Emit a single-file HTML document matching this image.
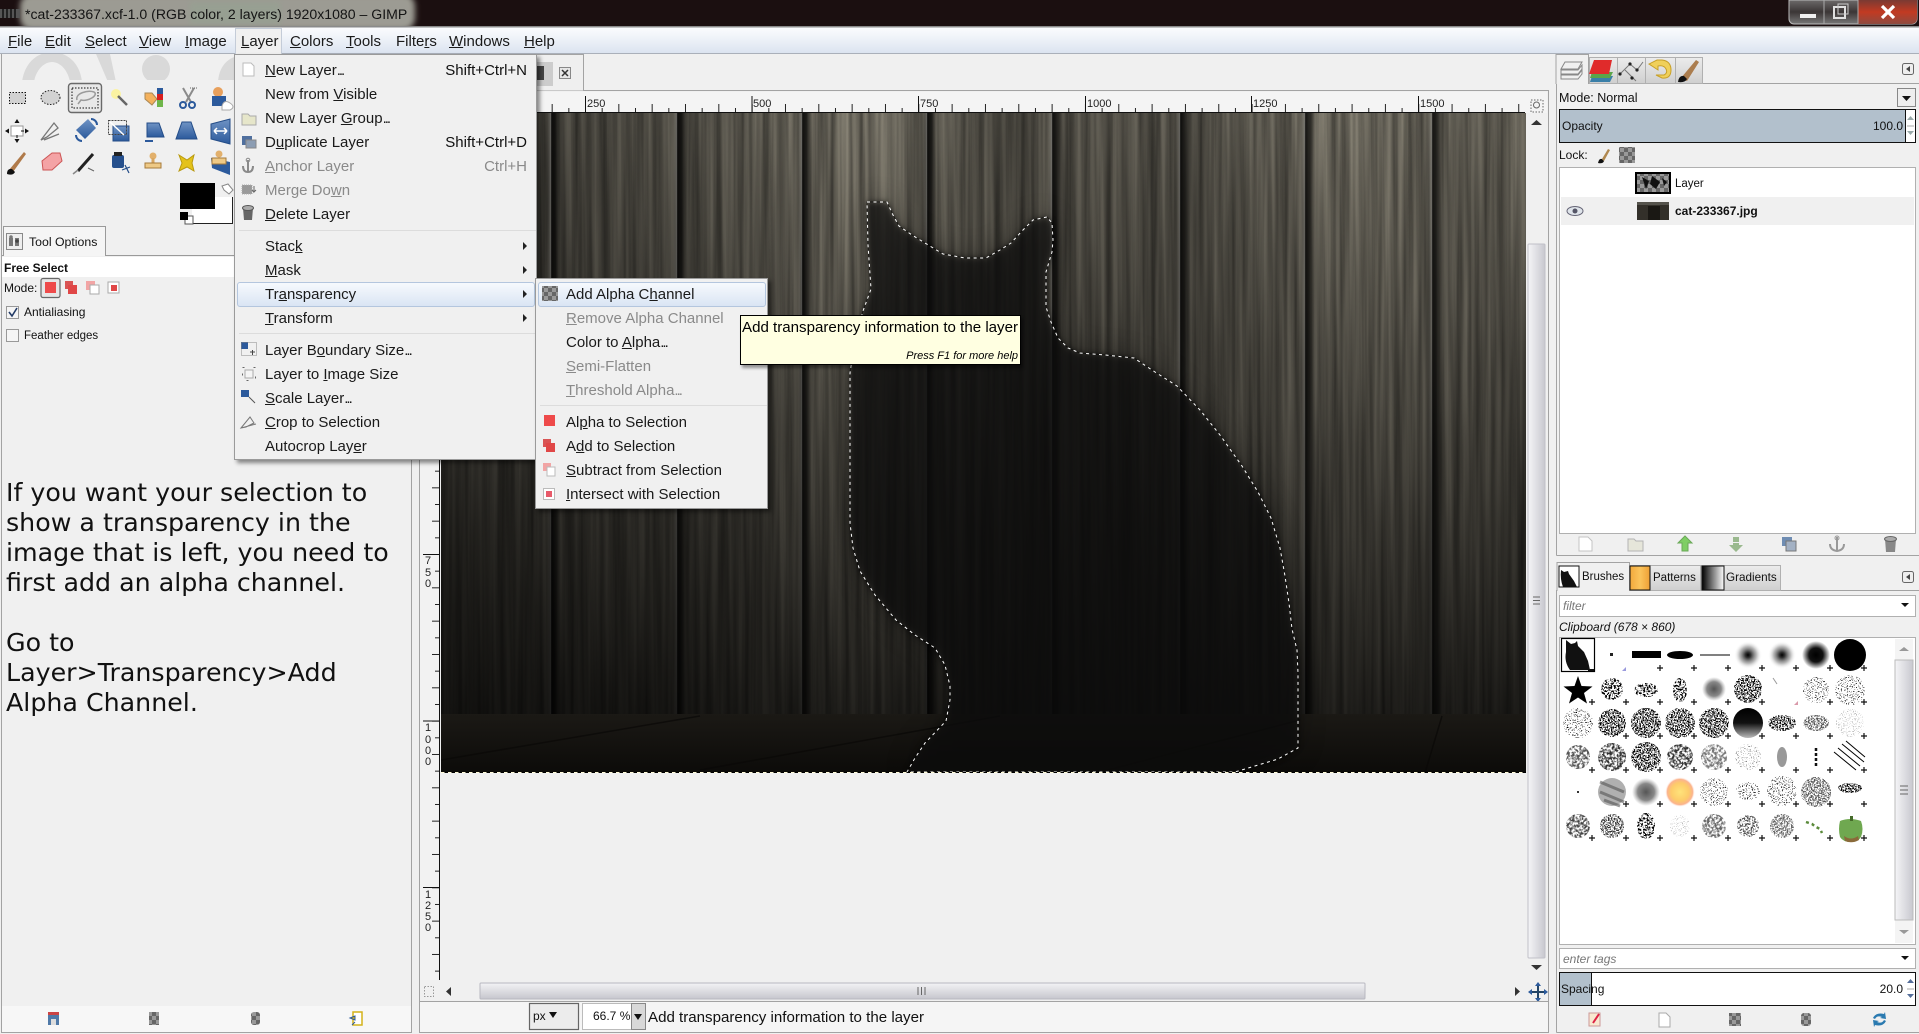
<!DOCTYPE html>
<html lang="en"><head><meta charset="utf-8"><title>GIMP</title>
<style>
html,body{margin:0;padding:0;width:1919px;height:1034px;overflow:hidden;background:#f0f0f0}
body{position:relative;font-family:"Liberation Sans",sans-serif;color:#111}
svg.l{position:absolute;left:0;top:0}
.t{position:absolute;white-space:nowrap;line-height:20px;font-size:12px}
.m{font-size:15px;line-height:20px;position:absolute;white-space:nowrap;color:#1a1a1a;transform:translateY(1px)}
.d{color:#8a8a8a}
.e{letter-spacing:-2px}
.s{position:absolute;right:9px;font-size:15px;line-height:20px;transform:translateY(1px)}
.menu{position:absolute;background:#f0f0f0;border:1px solid #9a9a9a;box-shadow:3px 3px 4px rgba(0,0,0,.45)}
.hl{position:absolute;height:23px;border:1px solid #b4c6de;border-radius:3px;background:linear-gradient(#f6f9fd,#dae5f4)}
.sep{position:absolute;height:1px;background:#dcdcdc}
.arr{position:absolute;width:0;height:0;border-left:4px solid #222;border-top:4px solid transparent;border-bottom:4px solid transparent;left:272px}
.big{position:absolute;left:6px;font-family:"DejaVu Sans",sans-serif;font-size:25.3px;line-height:30px;white-space:nowrap;color:#111}
</style></head><body>

<svg class="l" width="1919" height="1034" viewBox="0 0 1919 1034" xmlns="http://www.w3.org/2000/svg">
<defs>
<linearGradient id="mb" x1="0" y1="0" x2="0" y2="1"><stop offset="0" stop-color="#fbfcfe"/><stop offset=".3" stop-color="#f2f5fa"/><stop offset="1" stop-color="#dbe3f0"/></linearGradient>
<linearGradient id="vd" gradientUnits="userSpaceOnUse" x1="0" y1="113" x2="0" y2="773"><stop offset="0" stop-color="#000" stop-opacity="0"/><stop offset=".44" stop-color="#000" stop-opacity=".3"/><stop offset=".74" stop-color="#000" stop-opacity=".58"/><stop offset=".91" stop-color="#000" stop-opacity=".72"/><stop offset="1" stop-color="#000" stop-opacity=".75"/></linearGradient>
<linearGradient id="hd" gradientUnits="userSpaceOnUse" x1="441" y1="0" x2="1526" y2="0"><stop offset="0" stop-color="#000" stop-opacity=".42"/><stop offset=".24" stop-color="#000" stop-opacity=".28"/><stop offset=".38" stop-color="#000" stop-opacity="0"/><stop offset=".52" stop-color="#000" stop-opacity=".28"/><stop offset=".7" stop-color="#000" stop-opacity=".25"/><stop offset=".84" stop-color="#000" stop-opacity="0"/><stop offset="1" stop-color="#000" stop-opacity=".15"/></linearGradient>
<linearGradient id="gr" x1="0" y1="0" x2="1" y2="0"><stop offset="0" stop-color="#fff" stop-opacity="0"/><stop offset=".2" stop-color="#fff" stop-opacity=".12"/><stop offset=".32" stop-color="#000" stop-opacity=".8"/><stop offset=".6" stop-color="#000" stop-opacity=".62"/><stop offset="1" stop-color="#000" stop-opacity="0"/></linearGradient>
<linearGradient id="fl" x1="0" y1="0" x2="0" y2="1"><stop offset="0" stop-color="#1b1915"/><stop offset="1" stop-color="#0c0b09"/></linearGradient>
<linearGradient id="tv" x1="0" y1="0" x2="1" y2="0"><stop offset="0" stop-color="#f5f5f7"/><stop offset="1" stop-color="#c8c8cf"/></linearGradient>
<linearGradient id="th" x1="0" y1="0" x2="0" y2="1"><stop offset="0" stop-color="#f3f3f5"/><stop offset="1" stop-color="#c6c6cd"/></linearGradient>
<linearGradient id="tb" x1="0" y1="0" x2="0" y2="1"><stop offset="0" stop-color="#ececec"/><stop offset="1" stop-color="#cfcfcf"/></linearGradient>
<linearGradient id="wb" x1="0" y1="0" x2="0" y2="1"><stop offset="0" stop-color="#6d6a6a"/><stop offset=".5" stop-color="#3b3636"/><stop offset="1" stop-color="#777"/></linearGradient>
<linearGradient id="wc" x1="0" y1="0" x2="0" y2="1"><stop offset="0" stop-color="#7a3a33"/><stop offset=".5" stop-color="#c23a22"/><stop offset="1" stop-color="#8e4a40"/></linearGradient>
<linearGradient id="bl" x1="0" y1="0" x2="0" y2="1"><stop offset="0" stop-color="#6f93c4"/><stop offset="1" stop-color="#2c5a9c"/></linearGradient>
<linearGradient id="pat" x1="0" y1="0" x2="1" y2="0"><stop offset="0" stop-color="#f2a93c"/><stop offset=".5" stop-color="#fbc45c"/><stop offset="1" stop-color="#eea035"/></linearGradient>
<linearGradient id="grd" x1="0" y1="0" x2="1" y2="0"><stop offset="0" stop-color="#000"/><stop offset="1" stop-color="#fff"/></linearGradient>
<radialGradient id="sun"><stop offset="0" stop-color="#ffe37a"/><stop offset=".6" stop-color="#fdcb6a"/><stop offset=".85" stop-color="#fbb38e"/><stop offset="1" stop-color="#fff" stop-opacity="0"/></radialGradient>
<radialGradient id="sft"><stop offset="0" stop-color="#000"/><stop offset=".2" stop-color="#333"/><stop offset=".6" stop-color="#999" stop-opacity=".7"/><stop offset="1" stop-color="#fff" stop-opacity="0"/></radialGradient>
<radialGradient id="sft2"><stop offset="0" stop-color="#000"/><stop offset=".5" stop-color="#111"/><stop offset="1" stop-color="#000" stop-opacity="0"/></radialGradient>
<radialGradient id="gry"><stop offset="0" stop-color="#555"/><stop offset=".6" stop-color="#888"/><stop offset="1" stop-color="#aaa" stop-opacity="0"/></radialGradient>
<linearGradient id="sph" x1="0" y1="0" x2="0" y2="1"><stop offset="0" stop-color="#000"/><stop offset=".5" stop-color="#111"/><stop offset="1" stop-color="#bbb"/></linearGradient>
<pattern id="chk" width="8" height="8" patternUnits="userSpaceOnUse"><rect width="8" height="8" fill="#666"/><rect width="4" height="4" fill="#999"/><rect x="4" y="4" width="4" height="4" fill="#999"/></pattern>
<pattern id="plus" x="1561" y="638" width="34" height="34" patternUnits="userSpaceOnUse"><path d="M28 30h6M31 27v6" stroke="#111" stroke-width="1.2" fill="none"/></pattern>
<pattern id="htx" x="585" y="0" width="33.33" height="20" patternUnits="userSpaceOnUse"><path d="M.5 0V20" stroke="#222"/></pattern>
<pattern id="hts" x="601.67" y="0" width="33.33" height="20" patternUnits="userSpaceOnUse"><path d="M.5 0V20" stroke="#222"/></pattern>
<pattern id="vtx" x="0" y="554" width="20" height="33.33" patternUnits="userSpaceOnUse"><path d="M0 .5H20" stroke="#222"/></pattern>
<pattern id="vts" x="0" y="570.67" width="20" height="33.33" patternUnits="userSpaceOnUse"><path d="M0 .5H20" stroke="#222"/></pattern>
<filter id="grain" x="0" y="0" width="1" height="1" color-interpolation-filters="sRGB"><feTurbulence type="fractalNoise" baseFrequency="0.16 0.003" numOctaves="3" seed="7"/><feColorMatrix values="0 0 0 0 0 0 0 0 0 0 0 0 0 0 0 .8 0 0 0 -.15"/></filter>
<filter id="b1" x="-10%" y="-10%" width="120%" height="120%"><feGaussianBlur stdDeviation="3"/></filter>
<filter id="b2" x="-20%" y="-20%" width="140%" height="140%"><feGaussianBlur stdDeviation="14"/></filter>
<filter id="dn" color-interpolation-filters="sRGB"><feTurbulence type="fractalNoise" baseFrequency=".7" numOctaves="2" seed="3" result="n"/><feColorMatrix in="n" values="0 0 0 0 0 0 0 0 0 0 0 0 0 0 0 9 0 0 0 -4.1" result="a"/><feComposite in="SourceGraphic" in2="a" operator="in"/></filter>
<filter id="sp" color-interpolation-filters="sRGB"><feTurbulence type="fractalNoise" baseFrequency=".8" numOctaves="2" seed="11" result="n"/><feColorMatrix in="n" values="0 0 0 0 0 0 0 0 0 0 0 0 0 0 0 12 0 0 0 -7.2" result="a"/><feComposite in="SourceGraphic" in2="a" operator="in"/></filter>
<filter id="lt" color-interpolation-filters="sRGB"><feTurbulence type="fractalNoise" baseFrequency=".55" numOctaves="2" seed="5" result="n"/><feColorMatrix in="n" values="0 0 0 0 0 0 0 0 0 0 0 0 0 0 0 10 0 0 0 -4.8" result="a"/><feComposite in="SourceGraphic" in2="a" operator="in"/></filter>
<filter id="cl" color-interpolation-filters="sRGB"><feTurbulence type="fractalNoise" baseFrequency=".4" numOctaves="3" seed="9" result="n"/><feColorMatrix in="n" values="0 0 0 0 0 0 0 0 0 0 0 0 0 0 0 4 0 0 0 -1.5" result="a"/><feComposite in="SourceGraphic" in2="a" operator="in"/></filter>
<clipPath id="logo"><rect x="0" y="54" width="235" height="26"/></clipPath>
<clipPath id="img"><rect x="441" y="113" width="1085" height="660"/></clipPath>
<path id="cat" d="M867 202L887 202L893 215L899 226L912 235L925 243L943 254L965 258L986 258L1000 250L1011 243L1022 231L1033 220L1047 217L1052 223L1053 240L1052 252L1046 272L1046 307L1051 322L1058 338L1068 348L1080 353L1105 355L1134 358L1155 372L1177 386L1200 410L1220 435L1242 466L1258 492L1271 518L1280 548L1285 576L1289 603L1292 629L1297 650L1298 673L1298 748L1278 759L1235 772L907 772L915 758L925 743L946 721L950 700L950 686L945 665L935 648L915 635L896 620L875 595L860 571L853 548L850 523L850 373L855 340L863 311L871 289L868 245Z"/>
</defs>

<!-- title bar -->
<rect width="1919" height="27" fill="#1b0f10"/>
<rect x="20" y="-6" width="395" height="36" rx="12" fill="#9c9b93" filter="url(#b1)"/>
<rect x="190" y="2" width="90" height="22" fill="#8fa892" opacity=".35" filter="url(#b1)"/>
<rect x="0" y="9" width="20" height="9" fill="#555"/><path d="M3 9v9M7 9v9M11 9v9M15 9v9" stroke="#111" stroke-width="1.5"/>
<rect y="26" width="1919" height="1.5" fill="#8a8a8a"/>
<rect y="27.5" width="1919" height="26" fill="url(#mb)"/>
<rect y="53" width="1919" height="1" fill="#aab0ba"/>
<!-- window buttons -->
<path d="M1789 0V19a5 5 0 0 0 5 5H1912a5 5 0 0 0 5-5V0Z" fill="url(#wb)" stroke="#bbb" stroke-width="1"/>
<path d="M1858 0H1917V19a5 5 0 0 1-5 5H1858Z" fill="url(#wc)"/>
<path d="M1824 0V24M1858 0V24" stroke="#aaa"/>
<rect x="1800" y="14" width="16" height="4" fill="#f0f0f0"/>
<rect x="1834" y="7" width="11" height="11" fill="none" stroke="#e0e0e0" stroke-width="2"/><rect x="1838" y="4" width="10" height="10" fill="none" stroke="#ccc" stroke-width="1"/>
<path d="M1882 6L1894 18M1894 6L1882 18" stroke="#fff" stroke-width="3.2"/>

<!-- left dock -->
<path d="M1.5 54V1032.5H411.5V54" fill="#f0f0f0" stroke="#a3a3a3"/>
<g clip-path="url(#logo)" fill="#d9d9d9"><path d="M22 82C25 60 40 52 52 52C66 52 80 62 82 82H70C68 70 60 62 52 62C44 62 36 70 34 82Z"/><circle cx="156" cy="69" r="14"/><path d="M96 54L110 54L116 82H108Z"/><path d="M218 82C219 66 228 58 238 56V82Z"/></g>
<rect x="68.500" y="83.500" width="33" height="29" rx="3" fill="#e8e8e8" stroke="#6a6a6a" stroke-width="1.400"/>
<!-- tools row 1 -->
<rect x="9.500" y="92.500" width="16" height="11" fill="#d2d2d2" stroke="#111" stroke-dasharray="1.500 1.500"/>
<ellipse cx="50.500" cy="97.500" rx="9.500" ry="7" fill="#d2d2d2" stroke="#222" stroke-dasharray="1.500 1.500"/>
<rect x="72" y="88" width="26" height="20" fill="none" stroke="#111" stroke-dasharray="1.500 1.500"/>
<path d="M77 100C75 93 88 90 94 92C99 95 88 102 81 100L78 104" fill="none" stroke="#9a9a9a" stroke-width="1.500"/>
<circle cx="116" cy="94" r="5" fill="#fbf3a2"/><path d="M118 96L127 105" stroke="#666" stroke-width="2.500"/>
<path d="M145 93h7l5 6-5 6-7-6z" fill="#f4b15c" stroke="#a85"/><rect x="157" y="88" width="6" height="6" fill="#2c5a9c"/><rect x="157" y="94" width="6" height="6" fill="#d81e1e"/><rect x="157" y="100" width="6" height="7" fill="#6fb54a"/>
<path d="M183 88L191 102M194 88L186 102" stroke="#8b8b8b" stroke-width="2"/><circle cx="183" cy="105" r="3" fill="none" stroke="#2c5a9c" stroke-width="2"/><circle cx="192" cy="105" r="3" fill="none" stroke="#2c5a9c" stroke-width="2"/><path d="M190 88h8" stroke="#666" stroke-dasharray="1 1"/>
<circle cx="218" cy="92" r="5" fill="#e8a05c"/><rect x="212" y="96" width="14" height="10" fill="#2c5a9c"/><path d="M222 106q2-7 8-3t0 7h-8z" fill="#fff" stroke="#aaa"/>
<!-- tools row 2 -->
<rect x="11" y="126" width="12" height="10" fill="#fff" stroke="#999"/><path d="M17 120v22M6 131h22" stroke="#111" stroke-width="1" stroke-dasharray="3 12 3"/><path d="M17 119l-2.500 4h5zM17 143l-2.500-4h5zM5 131l4-2.500v5zM29 131l-4-2.500v5z" fill="#111"/>
<path d="M41 140L54 123L58 128L47 137ZM44 140L59 134" fill="none" stroke="#777" stroke-width="1.300"/>
<path d="M76 130L88 119L96 128L85 139Z" fill="url(#bl)"/><path d="M91 119a6 6 0 0 1 6 6M76 135a6 6 0 0 0 6 6" fill="none" stroke="#2c5a9c" stroke-width="2"/>
<rect x="113" y="126" width="16" height="15" fill="url(#bl)" stroke="#244d88"/><rect x="108.500" y="120.500" width="18" height="14" fill="none" stroke="#444" stroke-dasharray="2 1"/><path d="M110 122l14 13" stroke="#fff" stroke-width="1.500"/>
<path d="M147 123h12l5 14h-17z" fill="url(#bl)" stroke="#244d88"/><path d="M145 141h8" stroke="#2c5a9c" stroke-width="2"/>
<path d="M182 122h9l6 17h-21z" fill="url(#bl)" stroke="#244d88"/>
<path d="M211 124L230 119V144L211 139Z" fill="url(#bl)" stroke="#244d88"/><path d="M214 131h13M214 131l3-3M214 131l3 3M227 131l-3-3M227 131l-3 3" stroke="#fff" stroke-width="1.500"/>
<!-- tools row 3 -->
<path d="M9 170L24 152L26 154L13 172Z" fill="#b07a4a"/><path d="M7 174q0-6 5-5l3 3q-2 4-8 2z" fill="#111"/>
<path d="M42 161L52 153H60L62 161L52 170H43Z" fill="#f4a3a5" stroke="#c55"/>
<path d="M78 171L93 154" stroke="#222" stroke-width="3"/><path d="M73 174l5-4" stroke="#888" stroke-width="1.500"/><path d="M88 168l6 3" stroke="#666"/>
<rect x="112" y="155" width="12" height="13" rx="2" fill="#254f8c"/><rect x="114" y="152" width="8" height="4" fill="#222"/><path d="M122 170l8-3M125 165l4 8" stroke="#244d88" stroke-width="1.200"/>
<circle cx="153" cy="156" r="3.500" fill="#e2b06c"/><rect x="151.500" y="158" width="3" height="5" fill="#d8a660"/><rect x="145" y="163" width="16" height="5" fill="#eec986" stroke="#a67a3a"/>
<path d="M179 155L187 160L194 155L192 163L194 171L187 167L179 171L182 163Z" fill="#e4c21a" stroke="#b99a10"/>
<path d="M211 158L230 162V175L212 168Z" fill="#2c5a9c"/><circle cx="219" cy="154" r="3.500" fill="#e2b06c"/><rect x="212" y="158" width="14" height="6" fill="#eec986" stroke="#a67a3a"/>
<!-- FG/BG -->
<rect x="192" y="197" width="41" height="27" fill="#fff"/><path d="M192 223.500H232.500V197" fill="none" stroke="#222"/>
<rect x="180" y="183" width="35" height="26" fill="#000"/>
<path d="M222 186l6-2 5 6-4 4-5-4z" fill="#fff" stroke="#888"/>
<rect x="185" y="216" width="8" height="8" fill="#fff" stroke="#555"/><rect x="180" y="212" width="8" height="8" fill="#000"/>
<!-- tool options -->
<path d="M2 255.500H3.500V226.500H105.500V255.500H411" fill="none" stroke="#9a9a9a"/>
<rect x="4" y="227" width="101" height="29" fill="#f5f5f5"/>
<rect x="2" y="257" width="409" height="20" fill="#fff"/>
<rect x="6.500" y="233.500" width="16" height="16" fill="#eee" stroke="#888"/><rect x="9" y="238" width="4" height="8" fill="#777"/><rect x="15" y="238" width="4" height="8" fill="#777"/><circle cx="11" cy="237" r="1.800" fill="#777"/><circle cx="17" cy="241" r="1.800" fill="#444"/>
<rect x="41" y="278.500" width="19" height="19" rx="2" fill="#e6e6e6" stroke="#666" stroke-width="1.200"/>
<rect x="45" y="282" width="11" height="11" fill="#ee4a4a"/>
<rect x="65" y="281" width="8" height="8" fill="#d95454"/><rect x="68" y="285" width="9" height="9" fill="#e04747"/>
<rect x="86" y="281" width="9" height="9" fill="#f2a5a5"/><rect x="90" y="285" width="9" height="9" fill="#fff" stroke="#aaa"/>
<rect x="108" y="282" width="11" height="11" fill="#fff" stroke="#aaa"/><rect x="111" y="285" width="6" height="6" fill="#e04747"/>
<rect x="6.500" y="306.500" width="12" height="12" fill="#f5f5f5" stroke="#999"/><path d="M9 312l3 4 5-8" fill="none" stroke="#223a66" stroke-width="1.600"/>
<rect x="6.500" y="329.500" width="12" height="12" fill="#f5f5f5" stroke="#999"/>
<rect x="2" y="1006" width="409" height="26" fill="#f7f7f7"/>
<rect x="48" y="1012" width="11" height="13" fill="#4f79a8"/><rect x="48" y="1012" width="11" height="3" fill="#c44"/><rect x="51" y="1019" width="5" height="6" fill="#ddd"/>
<rect x="149" y="1012" width="10" height="13" fill="url(#chk)"/><rect x="251" y="1012" width="9" height="13" rx="3" fill="url(#chk)"/>
<rect x="353" y="1012" width="9" height="13" fill="#fff" stroke="#d4b21a" stroke-width="1.500"/><path d="M350 1018l5-2v4zM352 1025l3-3" fill="#d4b21a" stroke="#2c5a9c"/>

<!-- canvas frame -->
<rect x="419.500" y="90.500" width="1129" height="942" fill="#f0f0f0" stroke="#a3a3a3"/>
<rect x="420" y="92" width="1127" height="21" fill="#f4f4f4"/>
<rect x="420" y="113" width="20" height="867" fill="#f2f2f2"/>
<path d="M536 90.500V54.500H583.500V90.500" fill="#efefef" stroke="#a3a3a3"/>
<rect x="536" y="62" width="17" height="24" fill="#ccc"/><rect x="536" y="66" width="8" height="14" fill="#444"/>
<rect x="559.500" y="67.500" width="11" height="11" fill="#e6e6e6" stroke="#888"/><path d="M562 70l6 6M568 70l-6 6" stroke="#333" stroke-width="1.500"/>
<!-- rulers -->
<path d="M420 112.500H1525M439.500 113V980" stroke="#111"/>
<rect x="440" y="104" width="1085" height="8" fill="url(#htx)"/>
<rect x="440" y="108" width="1085" height="4" fill="url(#hts)"/>
<rect x="432" y="113" width="7" height="867" fill="url(#vtx)"/>
<rect x="435" y="113" width="4" height="867" fill="url(#vts)"/>
<path d="M585.500 96V112M752 96V112M918.500 96V112M1085.500 96V112M1251.500 96V112M1418.500 96V112M423 554.500H439M423 721H439M423 887.500H439" stroke="#111"/>
<g font-family="Liberation Sans" font-size="11" fill="#222"><text x="587" y="107">250</text><text x="753" y="107">500</text><text x="920" y="107">750</text><text x="1087" y="107">1000</text><text x="1253" y="107">1250</text><text x="1420" y="107">1500</text>
<text x="425" y="564">7</text><text x="425" y="576">5</text><text x="425" y="587">0</text>
<text x="425" y="731">1</text><text x="425" y="743">0</text><text x="425" y="754">0</text><text x="425" y="765">0</text>
<text x="425" y="898">1</text><text x="425" y="909">2</text><text x="425" y="920">5</text><text x="425" y="931">0</text></g>
<rect x="1531" y="100" width="12" height="12" fill="none" stroke="#666" stroke-dasharray="1.500 1.500"/><circle cx="1536.500" cy="105" r="3" fill="none" stroke="#666"/>
<!-- image -->
<g clip-path="url(#img)">
<rect x="441" y="113" width="1085" height="660" fill="#8a8577"/>
<rect x="441" y="113" width="1085" height="660" filter="url(#grain)"/>
<rect x="441" y="113" width="1085" height="660" fill="url(#hd)"/>
<g fill="url(#gr)"><rect x="421" y="113" width="14" height="605"/><rect x="547" y="113" width="14" height="605"/><rect x="673" y="113" width="14" height="605"/><rect x="798" y="113" width="14" height="605"/><rect x="923" y="113" width="14" height="605"/><rect x="1048" y="113" width="14" height="605"/><rect x="1176" y="113" width="14" height="605"/><rect x="1301" y="113" width="14" height="605"/><rect x="1428" y="113" width="14" height="605"/></g>
<rect x="441" y="113" width="1085" height="660" fill="url(#vd)"/>
<rect x="441" y="714" width="1085" height="59" fill="url(#fl)"/>
<path d="M441 760L700 716M700 770L1000 716M1100 772L1300 720M1442 716L1425 773" stroke="#0a0907" stroke-width="1.500" opacity=".7" fill="none"/>
<use href="#cat" fill="#000" opacity=".3" filter="url(#b2)"/>
<use href="#cat" fill="#0a0907" opacity=".68" filter="url(#b1)"/>
</g>
<use href="#cat" fill="none" stroke="#000" stroke-width=".8" opacity=".6"/>
<use href="#cat" fill="none" stroke="#fff" stroke-width="1" stroke-dasharray="3 3.500"/>
<path d="M441 772.500H1526" stroke="#000"/><path d="M441 772.500H1526" stroke="#fffbd8" stroke-dasharray="3.500 3.500"/>
<!-- canvas scrollbars -->
<path d="M1531 125l5.500-5 5.500 5z" fill="#333"/><path d="M1531 965l5.500 5 5.500-5z" fill="#333"/>
<rect x="1528" y="244" width="17" height="714" rx="1" fill="url(#tv)" stroke="#c0c0c8"/><path d="M1533 597h7M1533 600.500h7M1533 604h7" stroke="#666"/>
<rect x="480" y="983" width="885" height="16" rx="1" fill="url(#th)" stroke="#b8b8c0"/><path d="M918 987v8M921.500 987v8M925 987v8" stroke="#666"/>
<path d="M451 987l-5 4.500 5 4.500z" fill="#333"/><path d="M1515 987l5 4.500-5 4.500z" fill="#333"/>
<rect x="424.500" y="986.500" width="9" height="10" fill="none" stroke="#999" stroke-dasharray="1.500 1.500"/>
<path d="M1538 985v14M1531 992h14" stroke="#246" stroke-width="2"/><path d="M1538 982l-3 4h6zM1538 1002l-3-4h6zM1528 992l4-3v6zM1548 992l-4-3v6z" fill="#2c5a9c"/>
<rect x="420" y="1002" width="1128" height="30" fill="#f5f5f5"/><path d="M420 1001.500H1548" stroke="#a3a3a3"/>
<rect x="529.500" y="1003.500" width="49" height="26" fill="#ececec" stroke="#666" stroke-width="1.200"/>
<rect x="582.500" y="1003.500" width="49" height="26" fill="#fff" stroke="#bbb"/><rect x="631.500" y="1003.500" width="14" height="26" fill="#d8d8d8" stroke="#888"/>
<path d="M549 1012h8l-4 6zM634 1014h8l-4 6z" fill="#111"/>

<!-- right dock -->
<rect x="1556" y="83" width="363" height="472" fill="#f0f0f0"/>
<path d="M1556.500 555.500V83.500H1919M1556.500 555.500H1919" fill="none" stroke="#a3a3a3"/>
<rect x="1589.500" y="57.500" width="28" height="26" fill="url(#tb)" stroke="#b0b0b0"/><rect x="1617.500" y="57.500" width="28" height="26" fill="url(#tb)" stroke="#b0b0b0"/><rect x="1645.500" y="57.500" width="30" height="26" fill="url(#tb)" stroke="#b0b0b0"/><rect x="1675.500" y="57.500" width="27" height="26" fill="url(#tb)" stroke="#b0b0b0"/>
<path d="M1556 84V54.500H1588.500V84" fill="#f0f0f0" stroke="#a3a3a3"/>
<g fill="#f0f0f0" stroke="#888"><path d="M1561 75h17l4-5v4l-4 5h-17z"/><path d="M1561 70h17l4-5v4l-4 5h-17z"/><path d="M1565 62h17l-4 7h-17z"/></g>
<path d="M1592 76h21l-3 6h-20z" fill="#3a7fa8"/><path d="M1592 72h21l-3 6h-20z" fill="#5aa54a"/><path d="M1594 60h18l-3 14h-20z" fill="#e02b2b"/>
<path d="M1620 74L1630 64L1637 70L1643 62M1625 70L1636 81" fill="none" stroke="#777"/><g fill="#222"><circle cx="1620" cy="74" r="1.600"/><circle cx="1630" cy="64" r="1.600"/><circle cx="1637" cy="70" r="1.600"/><circle cx="1632" cy="78" r="1.600"/></g>
<path d="M1657 60h5q9 1 9 10t-9 8l-6-3 8 0q4-2 2-6t-8-3v4l-9-6z" fill="#f0d05a" stroke="#c8a028"/>
<path d="M1681 78L1696 60L1699 62L1687 81Z" fill="#ab7d4e"/><path d="M1678 82q1-7 6-6l3 3q-2 4-9 3z" fill="#111"/>
<rect x="1902.500" y="63.500" width="11" height="11" rx="2" fill="#eee" stroke="#666"/><path d="M1910 66v6l-4-3z" fill="#444"/>
<rect x="1897.500" y="88.500" width="18" height="18" fill="#eee" stroke="#888"/><path d="M1902 96h9l-4.500 5z" fill="#111"/>
<rect x="1559.500" y="109.500" width="356" height="33" fill="#fff" stroke="#111"/><rect x="1560" y="110" width="345" height="32" fill="#b2c0cc"/><path d="M1905.500 110V142" stroke="#111"/><path d="M1907 120l3.500-4 3.500 4zM1907 131l3.500 4 3.500-4z" fill="#9aa"/><path d="M1907 126h7" stroke="#aaa"/>
<path d="M1598 163q1-5 4-4l2 2q-1 3-6 2z" fill="#111"/><path d="M1602 159L1608 149L1610 150L1604 161Z" fill="#b08850"/>
<rect x="1619" y="147" width="16" height="16" fill="url(#chk)"/>
<rect x="1559.500" y="167.500" width="356" height="366" fill="#fff" stroke="#b0b0b0"/>
<rect x="1561" y="197" width="353" height="28" fill="#f0f0f0"/>
<rect x="1636" y="173" width="34" height="20" fill="url(#chk)" stroke="#000" stroke-width="2"/><path d="M1642 177l7 4-3 8zM1652 176l8 6-4 7-6-5zM1662 178l5 4-3 4z" fill="#111"/>
<ellipse cx="1575" cy="211" rx="8" ry="4.500" fill="#dfe4ea" stroke="#667"/><circle cx="1575" cy="211" r="2.500" fill="#556"/>
<rect x="1637" y="202" width="32" height="18" fill="#33302a"/><rect x="1648" y="206" width="12" height="14" fill="#1a1814"/><rect x="1637" y="202" width="32" height="3" fill="#55534c"/>
<path d="M1579 537h9l4 4v10h-13z" fill="#fff" stroke="#c4c4c4"/>
<path d="M1628 539h6l2 2h7v10h-15z" fill="#e6e6da" stroke="#b4b4b4"/>
<path d="M1685 536l7 7h-4v8h-6v-8h-4z" fill="#7fce64" stroke="#6aa858"/>
<path d="M1736 552l-7-7h4v-2h6v2h4zM1733 537h6v5h-6z" fill="#9ab98e"/>
<rect x="1782" y="537" width="10" height="9" fill="#6f8db3"/><rect x="1786" y="541" width="10" height="10" fill="#a3b1c4" stroke="#777"/>
<path d="M1837 537v13M1830 544q0 6 7 7 7-1 7-7" fill="none" stroke="#999" stroke-width="2"/><circle cx="1837" cy="538" r="2" fill="none" stroke="#999"/>
<path d="M1885 539h11l-1 13h-9z" fill="#888"/><ellipse cx="1890.500" cy="539" rx="6" ry="2.500" fill="#aaa" stroke="#666"/>
<!-- brushes dock -->
<rect x="1556" y="562" width="363" height="471" fill="#f0f0f0"/>
<path d="M1556.500 1032.500V590.500H1919M1556.500 1032.500H1919" fill="none" stroke="#a3a3a3"/>
<rect x="1629.500" y="565.500" width="71" height="25" fill="url(#tb)" stroke="#b0b0b0"/><rect x="1701.500" y="565.500" width="79" height="25" fill="url(#tb)" stroke="#b0b0b0"/>
<path d="M1557 591V562.500H1629.500V591" fill="#f0f0f0" stroke="#a3a3a3"/>
<rect x="1559" y="566" width="20" height="21" fill="#fff" stroke="#111"/><path d="M1561 570l3 2 4-1 1 3 5 7 3 6h-14q-3-8-2-17z" fill="#111"/>
<rect x="1630" y="566" width="20" height="24" fill="url(#pat)" stroke="#111"/>
<rect x="1702" y="566" width="22" height="24" fill="url(#grd)" stroke="#111"/>
<rect x="1902.500" y="571.500" width="11" height="11" rx="2" fill="#eee" stroke="#666"/><path d="M1910 574v6l-4-3z" fill="#444"/>
<rect x="1559.500" y="595.500" width="356" height="21" fill="#fff" stroke="#b0b0b0"/><path d="M1901 603h8l-4 4z" fill="#111"/>
<rect x="1559.500" y="637.500" width="356" height="307" fill="#fff" stroke="#b0b0b0"/>
<rect x="1895" y="639" width="18" height="304" fill="#f4f4f4"/>
<path d="M1899 651l5-4 5 4z" fill="#999"/><path d="M1899 930l5 4 5-4z" fill="#999"/>
<rect x="1895" y="660" width="18" height="260" fill="url(#tv)" stroke="#bbb"/><path d="M1900 786h8M1900 790h8M1900 794h8" stroke="#666"/>
<!-- brush cells -->
<rect x="1561" y="638" width="306" height="204" fill="url(#plus)"/>
<rect x="1561" y="638" width="68" height="34" fill="#fff"/><rect x="1561" y="706" width="34" height="34" fill="#fff"/><rect x="1561" y="774" width="34" height="34" fill="#fff"/><rect x="1765" y="672" width="34" height="34" fill="#fff"/>
<path d="M1626 671v-4l-4 4z" fill="#9a9add"/><path d="M1798 705v-4l-4 4z" fill="#d99aaa"/>
<rect x="1561.500" y="638.500" width="33" height="33" fill="#fff" stroke="#000" stroke-width="1.200"/>
<path d="M1566 640l5 4 4-1 2-2 1 5 6 6 4 9 2 9h-20q-6-8-4-18z" fill="#111"/><rect x="1588" y="669" width="6" height="2" fill="#111"/>
<rect x="1610" y="653" width="3" height="3" fill="#222"/><rect x="1632" y="651" width="29" height="7" fill="#000"/>
<ellipse cx="1680" cy="655" rx="13" ry="4" fill="#000"/><path d="M1700 655h30" stroke="#000" stroke-width="1"/>
<circle cx="1748" cy="655" r="14" fill="url(#sft)"/><circle cx="1782" cy="655" r="14" fill="url(#sft)"/><circle cx="1816" cy="655" r="14" fill="url(#sft2)"/><circle cx="1850" cy="655" r="16" fill="#000"/>
<path d="M1578 676l3.500 10 11 .5-8.500 6.500 3 10.500-9-6-9 6 3-10.500-8.500-6.500 11-.5z" fill="#000"/>
<circle cx="1612" cy="689" r="11" filter="url(#lt)"/><ellipse cx="1646" cy="690" rx="12" ry="7" filter="url(#lt)"/><ellipse cx="1680" cy="690" rx="7" ry="12" filter="url(#lt)"/><circle cx="1714" cy="689" r="12" fill="url(#gry)"/><circle cx="1748" cy="689" r="14" filter="url(#dn)"/><path d="M1773 678l4 6" stroke="#999"/><circle cx="1816" cy="690" r="13" filter="url(#sp)"/><circle cx="1850" cy="690" r="15" filter="url(#sp)"/>
<circle cx="1578" cy="723" r="15" filter="url(#sp)"/><circle cx="1612" cy="723" r="14" filter="url(#dn)"/><circle cx="1646" cy="723" r="15" filter="url(#dn)"/><circle cx="1680" cy="723" r="15" filter="url(#dn)"/><circle cx="1714" cy="723" r="15" filter="url(#dn)"/><circle cx="1748" cy="723" r="15" fill="url(#sph)"/><ellipse cx="1782" cy="723" rx="14" ry="8" filter="url(#dn)"/><ellipse cx="1816" cy="723" rx="13" ry="8" fill="#555" filter="url(#dn)"/><circle cx="1850" cy="723" r="14" fill="#aaa" filter="url(#sp)"/>
<circle cx="1578" cy="757" r="12" fill="#555" filter="url(#cl)"/><circle cx="1612" cy="757" r="14" fill="#333" filter="url(#cl)"/><circle cx="1646" cy="757" r="15" filter="url(#dn)"/><circle cx="1680" cy="757" r="13" fill="#333" filter="url(#cl)"/><circle cx="1714" cy="757" r="13" fill="#777" filter="url(#cl)"/><circle cx="1748" cy="757" r="13" fill="#888" filter="url(#sp)"/><ellipse cx="1782" cy="757" rx="5" ry="10" fill="#999"/><path d="M1816 748v18" stroke="#111" stroke-width="2.500" stroke-dasharray="3 2"/><path d="M1838 748l22 18M1842 744l22 18M1834 752l22 18M1846 741l19 16" stroke="#000" stroke-width="1"/>
<rect x="1577" y="791" width="2" height="2" fill="#333"/><ellipse cx="1612" cy="792" rx="14" ry="14" fill="#b0b0b0"/><path d="M1600 782l24 10M1600 792l24 10M1604 800l16 6" stroke="#555" stroke-width="3" opacity=".6"/><circle cx="1646" cy="792" r="14" fill="url(#gry)"/><circle cx="1680" cy="792" r="15" fill="url(#sun)"/><circle cx="1714" cy="792" r="14" filter="url(#sp)"/><ellipse cx="1748" cy="791" rx="12" ry="9" filter="url(#sp)"/><circle cx="1782" cy="791" r="15" filter="url(#sp)"/><circle cx="1816" cy="792" r="15" fill="#555" filter="url(#dn)"/><ellipse cx="1850" cy="788" rx="12" ry="5" filter="url(#dn)"/>
<circle cx="1578" cy="826" r="12" fill="#444" filter="url(#cl)"/><circle cx="1612" cy="826" r="12" fill="#333" filter="url(#dn)"/><ellipse cx="1646" cy="826" rx="9" ry="13" filter="url(#lt)"/><ellipse cx="1680" cy="826" rx="10" ry="11" fill="#bbb" filter="url(#sp)"/><circle cx="1714" cy="826" r="12" fill="#666" filter="url(#cl)"/><circle cx="1748" cy="826" r="11" fill="#555" filter="url(#lt)"/><circle cx="1782" cy="826" r="12" fill="#666" filter="url(#dn)"/><path d="M1806 822l6 2 4 3 4 2 2 4" stroke="#5a8a3a" stroke-width="2.500" stroke-dasharray="3 3" fill="none"/>
<path d="M1840 821q10-4 21 0q3 8 0 16q-3 5-10 5q-8 0-11-5q-2-8 0-16z" fill="#6fa850"/><path d="M1844 836q7 5 14 0l1 4q-7 4-14 1z" fill="#8a6a3a"/><path d="M1850 816h3v5h-3z" fill="#456a2a"/>
<!-- tags/spacing -->
<rect x="1559.500" y="948.500" width="356" height="20" fill="#fff" stroke="#b0b0b0"/><path d="M1901 956h8l-4 4z" fill="#111"/>
<rect x="1559.500" y="972.500" width="356" height="33" fill="#fff" stroke="#111"/><rect x="1560" y="973" width="31" height="32" fill="#b2c0cc"/><path d="M1591.500 973V1005" stroke="#111"/><path d="M1907 983l3.500-4 3.500 4zM1907 994l3.500 4 3.500-4z" fill="#556e9a"/><path d="M1907 989h7" stroke="#aaa"/>
<rect x="1589" y="1013" width="11" height="13" fill="#f8e8d0" stroke="#c99"/><path d="M1593 1023l6-9" stroke="#d24" stroke-width="2"/>
<path d="M1659 1013h7l4 4v10h-11z" fill="#fff" stroke="#aaa"/>
<rect x="1729" y="1013" width="12" height="13" fill="url(#chk)"/><rect x="1801" y="1013" width="10" height="13" rx="3" fill="url(#chk)"/>
<path d="M1873 1018q3-6 11-4l1-2 1 7-6-1 2-1q-5-2-7 2zM1886 1021q-3 6-11 4l-1 2-1-7 6 1-2 1q5 2 7-2z" fill="#2a7ab0"/>
</svg>

<!-- title & menu bar text -->
<div class="t" style="left:25px;top:4px;font-size:14.1px;color:#141414">*cat-233367.xcf-1.0 (RGB color, 2 layers) 1920x1080 – GIMP</div>
<div class="m" style="left:8px;top:31px"><u>F</u>ile</div>
<div class="m" style="left:45px;top:31px"><u>E</u>dit</div>
<div class="m" style="left:85px;top:31px"><u>S</u>elect</div>
<div class="m" style="left:139px;top:31px"><u>V</u>iew</div>
<div class="m" style="left:185px;top:31px"><u>I</u>mage</div>
<div class="m" style="left:290px;top:31px"><u>C</u>olors</div>
<div class="m" style="left:346px;top:31px"><u>T</u>ools</div>
<div class="m" style="left:396px;top:31px">Filte<u>r</u>s</div>
<div class="m" style="left:449px;top:31px"><u>W</u>indows</div>
<div class="m" style="left:524px;top:31px"><u>H</u>elp</div>

<!-- tool options text -->
<div class="t" style="left:29px;top:232px;font-size:12.3px">Tool Options</div>
<div class="t" style="left:4px;top:258px;font-weight:bold">Free Select</div>
<div class="t" style="left:4px;top:278px">Mode:</div>
<div class="t" style="left:24px;top:302px">Antialiasing</div>
<div class="t" style="left:24px;top:326px;font-size:11.500px">Feather edges</div>
<div class="big" style="top:478px">If you want your selection to</div>
<div class="big" style="top:508px">show a transparency in the</div>
<div class="big" style="top:538px">image that is left, you need to</div>
<div class="big" style="top:568px">first add an alpha channel.</div>
<div class="big" style="top:628px">Go to</div>
<div class="big" style="top:658px">Layer&gt;Transparency&gt;Add</div>
<div class="big" style="top:688px">Alpha Channel.</div>

<!-- status -->
<div class="t" style="left:533px;top:1006px;font-size:12px">px</div>
<div class="t" style="left:593px;top:1006px;font-size:12px">66.7 %</div>
<div class="t" style="left:648px;top:1008px;font-size:15.1px">Add transparency information to the layer</div>

<!-- right dock text -->
<div class="t" style="left:1559px;top:88px;font-size:12.500px">Mode: Normal</div>
<div class="t" style="left:1562px;top:116px">Opacity</div>
<div class="t" style="right:16px;top:116px">100.0</div>
<div class="t" style="left:1559px;top:145px">Lock:</div>
<div class="t" style="left:1675px;top:174px;font-size:11.500px">Layer</div>
<div class="t" style="left:1675px;top:201px;font-weight:bold">cat-233367.jpg</div>
<div class="t" style="left:1582px;top:567px;font-size:11.500px">Brushes</div>
<div class="t" style="left:1653px;top:568px;font-size:11.500px">Patterns</div>
<div class="t" style="left:1726px;top:568px;font-size:11.700px">Gradients</div>
<div class="t" style="left:1563px;top:596px;font-style:italic;color:#777">filter</div>
<div class="t" style="left:1559px;top:617px;font-style:italic">Clipboard (678 × 860)</div>
<div class="t" style="left:1563px;top:949px;font-style:italic;color:#777">enter tags</div>
<div class="t" style="left:1561px;top:979px">Spacing</div>
<div class="t" style="right:16px;top:979px">20.0</div>

<!-- Layer menu -->
<div style="position:absolute;left:235px;top:28px;width:47px;height:26px;background:#f0f0f0;border:1px solid #c4ccd8;border-bottom:0;box-sizing:border-box"></div>
<div class="m" style="left:241px;top:31px"><u>L</u>ayer</div>
<div class="menu" style="left:234px;top:54px;width:301px;height:404px">
<div class="sep" style="left:4px;right:0;top:175px"></div>
<div class="sep" style="left:4px;right:0;top:278px"></div>
<div class="hl" style="left:2px;right:1px;top:227px"></div>
<div class="m" style="left:30px;top:5px"><u>N</u>ew Layer<span class="e">...</span></div><div class="s" style="top:5px">Shift+Ctrl+N</div>
<div class="m" style="left:30px;top:29px">New from <u>V</u>isible</div>
<div class="m" style="left:30px;top:53px">New Layer <u>G</u>roup<span class="e">...</span></div>
<div class="m" style="left:30px;top:77px">D<u>u</u>plicate Layer</div><div class="s" style="top:77px">Shift+Ctrl+D</div>
<div class="m d" style="left:30px;top:101px"><u>A</u>nchor Layer</div><div class="s d" style="top:101px">Ctrl+H</div>
<div class="m d" style="left:30px;top:125px">Merge Do<u>w</u>n</div>
<div class="m" style="left:30px;top:149px"><u>D</u>elete Layer</div>
<div class="m" style="left:30px;top:181px">Stac<u>k</u></div><div class="arr" style="left:288px;top:187px"></div>
<div class="m" style="left:30px;top:205px"><u>M</u>ask</div><div class="arr" style="left:288px;top:211px"></div>
<div class="m" style="left:30px;top:229px">Tr<u>a</u>nsparency</div><div class="arr" style="left:288px;top:235px"></div>
<div class="m" style="left:30px;top:253px"><u>T</u>ransform</div><div class="arr" style="left:288px;top:259px"></div>
<div class="m" style="left:30px;top:285px">Layer B<u>o</u>undary Size<span class="e">...</span></div>
<div class="m" style="left:30px;top:309px">Layer to <u>I</u>mage Size</div>
<div class="m" style="left:30px;top:333px"><u>S</u>cale Layer<span class="e">...</span></div>
<div class="m" style="left:30px;top:357px"><u>C</u>rop to Selection</div>
<div class="m" style="left:30px;top:381px">Autocrop Lay<u>e</u>r</div>
</div>
<!-- Transparency submenu -->
<div class="menu" style="left:535px;top:278px;width:231px;height:229px">
<div class="hl" style="left:2px;right:1px;top:3px"></div>
<div class="sep" style="left:4px;right:0;top:126px"></div>
<div class="m" style="left:30px;top:5px">Add Alpha C<u>h</u>annel</div>
<div class="m d" style="left:30px;top:29px"><u>R</u>emove Alpha Channel</div>
<div class="m" style="left:30px;top:53px">Color to <u>A</u>lpha<span class="e">...</span></div>
<div class="m d" style="left:30px;top:77px"><u>S</u>emi-Flatten</div>
<div class="m d" style="left:30px;top:101px"><u>T</u>hreshold Alpha<span class="e">...</span></div>
<div class="m" style="left:30px;top:133px">Al<u>p</u>ha to Selection</div>
<div class="m" style="left:30px;top:157px">A<u>d</u>d to Selection</div>
<div class="m" style="left:30px;top:181px"><u>S</u>ubtract from Selection</div>
<div class="m" style="left:30px;top:205px"><u>I</u>ntersect with Selection</div>
</div>

<!-- menu icons -->
<svg class="l" width="1919" height="1034" viewBox="0 0 1919 1034" xmlns="http://www.w3.org/2000/svg">
<path d="M243 63h8l3 3v10h-11z" fill="#fff" stroke="#bbb"/>
<path d="M242 114h6l2 2h6v9h-14z" fill="#e6e6ca" stroke="#aaa"/>
<rect x="242" y="136" width="10" height="9" fill="#4f6f9e"/><rect x="246" y="140" width="10" height="8" fill="#8c9db3" stroke="#888"/>
<path d="M248 160v11M243 166q0 6 5 6 5 0 5-6" fill="none" stroke="#8a8a8a" stroke-width="2"/><circle cx="248" cy="160" r="1.800" fill="none" stroke="#8a8a8a"/>
<rect x="242" y="185" width="10" height="9" fill="#999" stroke="#aaa" stroke-dasharray="1 1"/><path d="M254 186v6l2-2M254 192l-2-2" stroke="#666" fill="none"/>
<path d="M243 208h10l-1 12h-8z" fill="#666"/><ellipse cx="248" cy="208" rx="5.500" ry="2.500" fill="#aaa" stroke="#555"/>
<rect x="241" y="342" width="7" height="7" fill="#2c5a9c"/><rect x="241.500" y="342.500" width="15" height="13" fill="none" stroke="#888" stroke-dasharray="1 1"/><path d="M250 352h5M252.500 350v5" stroke="#444"/>
<rect x="242.500" y="367.500" width="13" height="13" fill="none" stroke="#666" stroke-dasharray="2 9"/><rect x="245" y="370" width="8" height="8" fill="#f5f5f5" stroke="#aaa"/>
<rect x="241" y="390" width="8" height="7" fill="#2c5a9c"/><path d="M249 397l6 6" stroke="#555"/>
<path d="M241 428L250 417L254 423L246 427ZM241 428L256 424" fill="none" stroke="#777"/>
<rect x="542" y="286" width="16" height="15" fill="url(#chk)"/>
<rect x="544" y="415" width="11" height="11" fill="#ee4a4a"/>
<rect x="543" y="439" width="8" height="8" fill="#d95454"/><rect x="546" y="443" width="9" height="9" fill="#e04747"/>
<rect x="543" y="463" width="8" height="8" fill="#f2a5a5"/><rect x="547" y="467" width="8" height="9" fill="#fff" stroke="#bbb"/>
<rect x="543.500" y="488.500" width="11" height="11" fill="#fff" stroke="#bbb"/><rect x="546" y="491" width="6" height="6" fill="#e85a6a"/>
</svg>

<!-- tooltip -->
<div style="position:absolute;left:740px;top:315px;width:279px;height:48px;background:#ffffe1;border:1px solid #000;box-shadow:2px 3px 3px rgba(0,0,0,.4)"></div>
<div class="t" style="left:742px;top:318px;font-size:15.1px;color:#000">Add transparency information to the layer</div>
<div class="t" style="right:901px;top:346px;font-size:11px;font-style:italic;color:#000">Press F1 for more help</div>
</body></html>
